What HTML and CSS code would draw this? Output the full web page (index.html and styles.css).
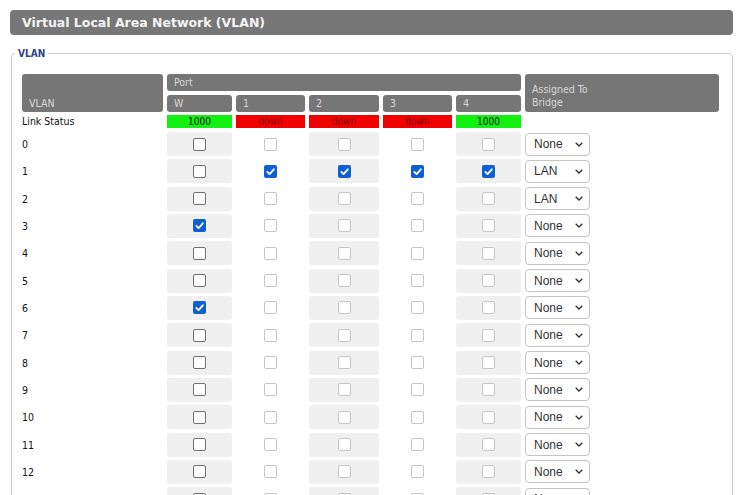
FILE: index.html
```html
<!DOCTYPE html>
<html lang="en">
<head>
<meta charset="utf-8">
<title>Virtual Local Area Network (VLAN)</title>
<link rel="stylesheet" href="styles.css">
</head>
<body>
<div class="page">
  <div class="titlebar">Virtual Local Area Network (VLAN)</div>
  <fieldset class="box">
    <legend>VLAN</legend>
    <div class="grid head">
      <div class="h h-vlan">VLAN</div>
      <div class="h h-port">Port</div>
      <div class="h h-bridge"><span>Assigned To</span><span>Bridge</span></div>
      <div class="h">W</div>
      <div class="h">1</div>
      <div class="h">2</div>
      <div class="h">3</div>
      <div class="h">4</div>
    </div>
    <div class="grid link">
      <div class="num">Link Status</div>
      <div class="ls up">1000</div>
      <div class="ls down">down</div>
      <div class="ls down">down</div>
      <div class="ls down">down</div>
      <div class="ls up">1000</div>
    </div>
    <div class="rows">
      <div class="grid row">
        <div class="num">0</div>
        <div class="cell sh"><span class="cb dk"></span></div>
        <div class="cell"><span class="cb"></span></div>
        <div class="cell sh"><span class="cb"></span></div>
        <div class="cell"><span class="cb"></span></div>
        <div class="cell sh"><span class="cb"></span></div>
        <div class="bcell"><div class="sel"><span>None</span><svg class="chev" viewBox="0 0 8 5" width="8" height="5"><path d="M0.7 0.7L4 4L7.3 0.7"/></svg></div></div>
      </div>
      <div class="grid row">
        <div class="num">1</div>
        <div class="cell sh"><span class="cb dk"></span></div>
        <div class="cell"><span class="cb on"><svg viewBox="0 0 13 13" width="13" height="13"><path d="M3.3 6.9L5.6 9.1L9.8 4.3"/></svg></span></div>
        <div class="cell sh"><span class="cb on"><svg viewBox="0 0 13 13" width="13" height="13"><path d="M3.3 6.9L5.6 9.1L9.8 4.3"/></svg></span></div>
        <div class="cell"><span class="cb on"><svg viewBox="0 0 13 13" width="13" height="13"><path d="M3.3 6.9L5.6 9.1L9.8 4.3"/></svg></span></div>
        <div class="cell sh"><span class="cb on"><svg viewBox="0 0 13 13" width="13" height="13"><path d="M3.3 6.9L5.6 9.1L9.8 4.3"/></svg></span></div>
        <div class="bcell"><div class="sel"><span>LAN</span><svg class="chev" viewBox="0 0 8 5" width="8" height="5"><path d="M0.7 0.7L4 4L7.3 0.7"/></svg></div></div>
      </div>
      <div class="grid row">
        <div class="num">2</div>
        <div class="cell sh"><span class="cb dk"></span></div>
        <div class="cell"><span class="cb"></span></div>
        <div class="cell sh"><span class="cb"></span></div>
        <div class="cell"><span class="cb"></span></div>
        <div class="cell sh"><span class="cb"></span></div>
        <div class="bcell"><div class="sel"><span>LAN</span><svg class="chev" viewBox="0 0 8 5" width="8" height="5"><path d="M0.7 0.7L4 4L7.3 0.7"/></svg></div></div>
      </div>
      <div class="grid row">
        <div class="num">3</div>
        <div class="cell sh"><span class="cb on"><svg viewBox="0 0 13 13" width="13" height="13"><path d="M3.3 6.9L5.6 9.1L9.8 4.3"/></svg></span></div>
        <div class="cell"><span class="cb"></span></div>
        <div class="cell sh"><span class="cb"></span></div>
        <div class="cell"><span class="cb"></span></div>
        <div class="cell sh"><span class="cb"></span></div>
        <div class="bcell"><div class="sel"><span>None</span><svg class="chev" viewBox="0 0 8 5" width="8" height="5"><path d="M0.7 0.7L4 4L7.3 0.7"/></svg></div></div>
      </div>
      <div class="grid row">
        <div class="num">4</div>
        <div class="cell sh"><span class="cb dk"></span></div>
        <div class="cell"><span class="cb"></span></div>
        <div class="cell sh"><span class="cb"></span></div>
        <div class="cell"><span class="cb"></span></div>
        <div class="cell sh"><span class="cb"></span></div>
        <div class="bcell"><div class="sel"><span>None</span><svg class="chev" viewBox="0 0 8 5" width="8" height="5"><path d="M0.7 0.7L4 4L7.3 0.7"/></svg></div></div>
      </div>
      <div class="grid row">
        <div class="num">5</div>
        <div class="cell sh"><span class="cb dk"></span></div>
        <div class="cell"><span class="cb"></span></div>
        <div class="cell sh"><span class="cb"></span></div>
        <div class="cell"><span class="cb"></span></div>
        <div class="cell sh"><span class="cb"></span></div>
        <div class="bcell"><div class="sel"><span>None</span><svg class="chev" viewBox="0 0 8 5" width="8" height="5"><path d="M0.7 0.7L4 4L7.3 0.7"/></svg></div></div>
      </div>
      <div class="grid row">
        <div class="num">6</div>
        <div class="cell sh"><span class="cb on"><svg viewBox="0 0 13 13" width="13" height="13"><path d="M3.3 6.9L5.6 9.1L9.8 4.3"/></svg></span></div>
        <div class="cell"><span class="cb"></span></div>
        <div class="cell sh"><span class="cb"></span></div>
        <div class="cell"><span class="cb"></span></div>
        <div class="cell sh"><span class="cb"></span></div>
        <div class="bcell"><div class="sel"><span>None</span><svg class="chev" viewBox="0 0 8 5" width="8" height="5"><path d="M0.7 0.7L4 4L7.3 0.7"/></svg></div></div>
      </div>
      <div class="grid row">
        <div class="num">7</div>
        <div class="cell sh"><span class="cb dk"></span></div>
        <div class="cell"><span class="cb"></span></div>
        <div class="cell sh"><span class="cb"></span></div>
        <div class="cell"><span class="cb"></span></div>
        <div class="cell sh"><span class="cb"></span></div>
        <div class="bcell"><div class="sel"><span>None</span><svg class="chev" viewBox="0 0 8 5" width="8" height="5"><path d="M0.7 0.7L4 4L7.3 0.7"/></svg></div></div>
      </div>
      <div class="grid row">
        <div class="num">8</div>
        <div class="cell sh"><span class="cb dk"></span></div>
        <div class="cell"><span class="cb"></span></div>
        <div class="cell sh"><span class="cb"></span></div>
        <div class="cell"><span class="cb"></span></div>
        <div class="cell sh"><span class="cb"></span></div>
        <div class="bcell"><div class="sel"><span>None</span><svg class="chev" viewBox="0 0 8 5" width="8" height="5"><path d="M0.7 0.7L4 4L7.3 0.7"/></svg></div></div>
      </div>
      <div class="grid row">
        <div class="num">9</div>
        <div class="cell sh"><span class="cb dk"></span></div>
        <div class="cell"><span class="cb"></span></div>
        <div class="cell sh"><span class="cb"></span></div>
        <div class="cell"><span class="cb"></span></div>
        <div class="cell sh"><span class="cb"></span></div>
        <div class="bcell"><div class="sel"><span>None</span><svg class="chev" viewBox="0 0 8 5" width="8" height="5"><path d="M0.7 0.7L4 4L7.3 0.7"/></svg></div></div>
      </div>
      <div class="grid row">
        <div class="num">10</div>
        <div class="cell sh"><span class="cb dk"></span></div>
        <div class="cell"><span class="cb"></span></div>
        <div class="cell sh"><span class="cb"></span></div>
        <div class="cell"><span class="cb"></span></div>
        <div class="cell sh"><span class="cb"></span></div>
        <div class="bcell"><div class="sel"><span>None</span><svg class="chev" viewBox="0 0 8 5" width="8" height="5"><path d="M0.7 0.7L4 4L7.3 0.7"/></svg></div></div>
      </div>
      <div class="grid row">
        <div class="num">11</div>
        <div class="cell sh"><span class="cb dk"></span></div>
        <div class="cell"><span class="cb"></span></div>
        <div class="cell sh"><span class="cb"></span></div>
        <div class="cell"><span class="cb"></span></div>
        <div class="cell sh"><span class="cb"></span></div>
        <div class="bcell"><div class="sel"><span>None</span><svg class="chev" viewBox="0 0 8 5" width="8" height="5"><path d="M0.7 0.7L4 4L7.3 0.7"/></svg></div></div>
      </div>
      <div class="grid row">
        <div class="num">12</div>
        <div class="cell sh"><span class="cb dk"></span></div>
        <div class="cell"><span class="cb"></span></div>
        <div class="cell sh"><span class="cb"></span></div>
        <div class="cell"><span class="cb"></span></div>
        <div class="cell sh"><span class="cb"></span></div>
        <div class="bcell"><div class="sel"><span>None</span><svg class="chev" viewBox="0 0 8 5" width="8" height="5"><path d="M0.7 0.7L4 4L7.3 0.7"/></svg></div></div>
      </div>
      <div class="grid row">
        <div class="num">13</div>
        <div class="cell sh"><span class="cb dk"></span></div>
        <div class="cell"><span class="cb"></span></div>
        <div class="cell sh"><span class="cb"></span></div>
        <div class="cell"><span class="cb"></span></div>
        <div class="cell sh"><span class="cb"></span></div>
        <div class="bcell"><div class="sel"><span>None</span><svg class="chev" viewBox="0 0 8 5" width="8" height="5"><path d="M0.7 0.7L4 4L7.3 0.7"/></svg></div></div>
      </div>
      <div class="grid row">
        <div class="num">14</div>
        <div class="cell sh"><span class="cb dk"></span></div>
        <div class="cell"><span class="cb"></span></div>
        <div class="cell sh"><span class="cb"></span></div>
        <div class="cell"><span class="cb"></span></div>
        <div class="cell sh"><span class="cb"></span></div>
        <div class="bcell"><div class="sel"><span>None</span><svg class="chev" viewBox="0 0 8 5" width="8" height="5"><path d="M0.7 0.7L4 4L7.3 0.7"/></svg></div></div>
      </div>
    </div>
  </fieldset>
</div>
</body>
</html>
```

FILE: styles.css
```css
html, body {
  margin: 0;
  padding: 0;
  background: #ffffff;
}

body {
  font-family: "DejaVu Sans Condensed", "DejaVu Sans", sans-serif;
  font-size: 10.5px;
  color: #111;
}

.page {
  padding: 10px;
}

.titlebar {
  height: 25px;
  line-height: 25px;
  background: #777777;
  border-radius: 4px;
  color: #f4f4f4;
  font-family: "DejaVu Sans", sans-serif;
  font-weight: bold;
  font-size: 12.5px;
  padding-left: 12px;
}

.box {
  margin: 12px 0 0 1px;
  border: 1px solid #cccccc;
  border-radius: 4px;
  padding: 14px 10px 0 10px;
  min-width: 0;
}

.box legend {
  font-family: "DejaVu Sans Condensed", "DejaVu Sans", sans-serif;
  font-weight: bold;
  font-size: 10px;
  line-height: 13px;
  color: #2d4087;
  padding: 0 3px;
  margin-left: -7px;
}

.grid {
  display: grid;
  grid-template-columns: 141px 65px 69px 70px 69px 65px 194px;
  column-gap: 4px;
}

.head {
  grid-template-rows: 17px 17px;
  row-gap: 4px;
}

.h {
  background: #767676;
  border-radius: 3px;
  color: #d8d8d8;
  padding-left: 7px;
  line-height: 17px;
}

.h-vlan {
  grid-row: 1 / 3;
  grid-column: 1;
  display: flex;
  align-items: flex-end;
}

.h-port {
  grid-row: 1;
  grid-column: 2 / 7;
}

.h-bridge {
  grid-row: 1 / 3;
  grid-column: 7;
  display: flex;
  flex-direction: column;
  justify-content: flex-end;
  line-height: 13px;
  padding-bottom: 3px;
}

.link {
  margin-top: 3px;
  height: 13px;
}

.link .num {
  line-height: 13px;
}

.ls {
  font-size: 10px;
  line-height: 13px;
  text-align: center;
}

.ls.up {
  background: #11f011;
  color: #111;
}

.ls.down {
  background: #f00000;
  color: #8a0000;
}

.rows {
  margin-top: 4px;
  display: flex;
  flex-direction: column;
  gap: 3.34px;
}

.row {
  height: 24px;
}

.num {
  display: flex;
  align-items: center;
  color: #111;
}

.cell {
  display: flex;
  align-items: center;
  justify-content: center;
  border-radius: 3px;
}

.cell.sh {
  background: #f0f0f0;
}

.cb {
  width: 13px;
  height: 13px;
  box-sizing: border-box;
  border: 1.5px solid #c6c6c6;
  border-radius: 2px;
  background: #ffffff;
  display: block;
}

.cb.dk {
  border-color: #707070;
}

.cb.on {
  border: none;
  background: #0d5fd2;
}

.cb.on svg {
  display: block;
}

.cb.on path {
  fill: none;
  stroke: #ffffff;
  stroke-width: 1.8;
  stroke-linecap: round;
  stroke-linejoin: round;
}

.bcell {
  display: flex;
  align-items: center;
}

.sel {
  width: 65px;
  height: 23px;
  box-sizing: border-box;
  border: 1px solid #c4c4c4;
  border-radius: 4px;
  background: #ffffff;
  padding: 0 6px 0 8px;
  display: flex;
  align-items: center;
  justify-content: space-between;
  font-family: "Liberation Sans", Arial, sans-serif;
  font-size: 12px;
  color: #333333;
}

.chev path {
  fill: none;
  stroke: #333333;
  stroke-width: 1.3;
}
```
